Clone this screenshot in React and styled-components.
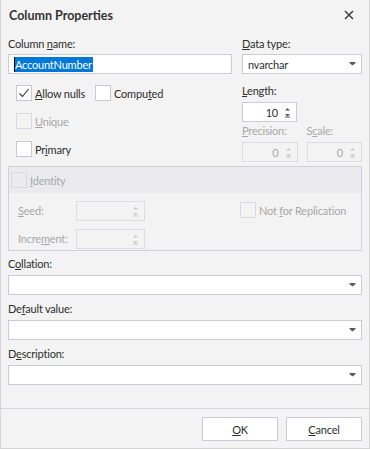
import React from "react";
import styled, { createGlobalStyle } from "styled-components";

const FONT = `Lato, "Open Sans", sans-serif`;

const Global = createGlobalStyle`
  html, body { margin: 0; padding: 0; background: #f3f3f3; }
  body { font-family: ${FONT}; font-size: 11px; letter-spacing: -0.2px; color: #2e2e2e; }
  * { box-sizing: border-box; }
`;

const Window = styled.div`
  width: 370px;
  height: 449px;
  background: #f3f3f3;
  border: 1px solid #d4d4d4;
  border-top: none;
  display: flex;
  flex-direction: column;
`;

const TitleBar = styled.div`
  height: 30px;
  flex: none;
  display: flex;
  align-items: center;
  justify-content: space-between;
  padding: 0 15px 0 8px;
  font-weight: 700;
  font-size: 12.5px;
  letter-spacing: 0;
  color: #333;
`;

const Body = styled.div`
  flex: 1;
  padding: 6px 7px 0 7px;
  display: flex;
  flex-direction: column;
`;

const TopGrid = styled.div`
  display: grid;
  grid-template-columns: 224px 1fr;
  column-gap: 10px;
`;

const Column = styled.div`
  display: flex;
  flex-direction: column;
`;

const Label = styled.div`
  height: 16px;
  line-height: 16px;
  margin-bottom: ${(p) => p.$gap ?? 2}px;
  margin-top: ${(p) => p.$top ?? 0}px;
  color: ${(p) => (p.$disabled ? "#a8a8a8" : "inherit")};
  white-space: nowrap;
`;

const Box = styled.div`
  height: 20px;
  width: ${(p) => p.$width || "100%"};
  border: 1px solid ${(p) => (p.$disabled ? "#dcdce4" : "#cbcbd8")};
  background: ${(p) => (p.$disabled ? "#f3f3f3" : "#fff")};
  color: ${(p) => (p.$disabled ? "#a8a8a8" : "inherit")};
  display: flex;
  align-items: center;
  padding: 0 5px;
  gap: 6px;
`;

const BoxText = styled.span`
  flex: 1;
  text-align: ${(p) => (p.$right ? "right" : "left")};
  white-space: nowrap;
`;

const Selected = styled.span`
  background: #0078d7;
  color: #fff;
  border-left: 1px solid #000;
  padding: 1px 1px 1px 0;
`;

const CheckList = styled.div`
  margin-top: 11px;
  padding-left: 8px;
  display: flex;
  flex-direction: column;
  gap: 12px;
`;

const CheckRow = styled.div`
  display: flex;
  gap: 10px;
`;

const CheckItem = styled.label`
  display: inline-flex;
  align-items: center;
  gap: 3px;
  height: 16px;
  color: ${(p) => (p.$disabled ? "#a8a8a8" : "inherit")};
  white-space: nowrap;
`;

const CheckBox = styled.span`
  width: 16px;
  height: 16px;
  flex: none;
  border: 1px solid ${(p) => (p.$disabled ? "#dadae2" : "#c9c9d6")};
  background: ${(p) => (p.$disabled ? "transparent" : "#fff")};
  display: flex;
  align-items: center;
  justify-content: center;
`;

const PairGrid = styled.div`
  display: grid;
  grid-template-columns: 1fr 1fr;
  column-gap: 9px;
`;

const Group = styled.div`
  margin-top: 4px;
  border: 1px solid #d0d0dc;
`;

const GroupHeader = styled.div`
  height: 26px;
  background: #ebebef;
  display: flex;
  align-items: center;
  padding-left: 2px;
`;

const GroupBody = styled.div`
  display: grid;
  grid-template-columns: 58px 69px 1fr;
  grid-template-rows: 20px 20px;
  row-gap: 8px;
  padding: 8px 0 1px 9px;
  align-items: center;
`;

const ReplicationCell = styled.div`
  grid-row: 1;
  grid-column: 3;
  padding-left: 95px;
`;

const Footer = styled.div`
  flex: none;
  border-top: 1px solid #d6d6de;
  padding: 8px 7px 7px 0;
  display: flex;
  justify-content: flex-end;
  gap: 8px;
`;

const Button = styled.button`
  width: 76px;
  height: 24px;
  background: #fff;
  border: 1px solid #cbcbd8;
  font-family: ${FONT};
  font-size: 11px;
  letter-spacing: -0.2px;
  color: #2e2e2e;
  padding: 0;
`;

const DropArrow = ({ disabled }) => (
  <svg width="7" height="4" viewBox="0 0 7 4">
    <path d="M0.5 0H6.5V1L3.5 3.5L0.5 1Z" fill={disabled ? "#c4c4c4" : "#5a5a5a"} />
  </svg>
);

const SpinArrows = ({ disabled }) => {
  const c = disabled ? "#cacaca" : "#555";
  return (
    <svg width="7" height="11" viewBox="0 0 7 11">
      <path d="M3.5 1L6 3.5H1Z" fill={c} />
      <path d="M1 7H6L3.5 9.5Z" fill={c} />
      <rect x="1" y="9.5" width="5" height="1" fill={c} />
    </svg>
  );
};

const Tick = () => (
  <svg width="12" height="12" viewBox="0 0 12 12">
    <path d="M1.5 6.5L4.5 9.5L10.5 2" fill="none" stroke="#333" strokeWidth="1.1" />
  </svg>
);

const Check = ({ checked, disabled, children }) => (
  <CheckItem $disabled={disabled}>
    <CheckBox $disabled={disabled}>{checked && <Tick />}</CheckBox>
    {children && <span>{children}</span>}
  </CheckItem>
);

const Spin = ({ value, disabled, width }) => (
  <Box $width={width} $disabled={disabled}>
    <BoxText $right>{value}</BoxText>
    <SpinArrows disabled={disabled} />
  </Box>
);

const Combo = ({ children }) => (
  <Box>
    <BoxText>{children}</BoxText>
    <DropArrow />
  </Box>
);

const Field = ({ label, children, top, gap }) => (
  <div>
    <Label $top={top} $gap={gap}>{label}</Label>
    {children}
  </div>
);

export default function App() {
  return (
    <>
      <Global />
      <Window>
        <TitleBar>
          <span>Column Properties</span>
          <svg width="10" height="10" viewBox="0 0 10 10">
            <path d="M1 1L9 9M9 1L1 9" stroke="#444" strokeWidth="1.6" />
          </svg>
        </TitleBar>
        <Body>
          <TopGrid>
            <Column>
              <Field label={<>Column <u>n</u>ame:</>}>
                <Box>
                  <BoxText><Selected>AccountNumber</Selected></BoxText>
                </Box>
              </Field>
              <CheckList>
                <CheckRow>
                  <Check checked><u>A</u>llow nulls</Check>
                  <Check>Compu<u>t</u>ed</Check>
                </CheckRow>
                <Check disabled><u>U</u>nique</Check>
                <Check>Pr<u>i</u>mary</Check>
              </CheckList>
            </Column>
            <Column>
              <Field label={<><u>D</u>ata type:</>}>
                <Combo>nvarchar</Combo>
              </Field>
              <Field top={9} gap={3} label={<><u>L</u>ength:</>}>
                <Spin value="10" width="55px" />
              </Field>
              <PairGrid>
                <div>
                  <Label $disabled $top={1} $gap={3}><u>P</u>recision:</Label>
                  <Spin value="0" disabled />
                </div>
                <div>
                  <Label $disabled $top={1} $gap={3}>S<u>c</u>ale:</Label>
                  <Spin value="0" disabled />
                </div>
              </PairGrid>
            </Column>
          </TopGrid>

          <Group>
            <GroupHeader>
              <Check disabled><u>I</u>dentity</Check>
            </GroupHeader>
            <GroupBody>
              <Label $disabled $gap={0}><u>S</u>eed:</Label>
              <Spin disabled width="69px" />
              <ReplicationCell>
                <Check disabled>Not <u>f</u>or Replication</Check>
              </ReplicationCell>
              <Label $disabled $gap={0}>Incre<u>m</u>ent:</Label>
              <Spin disabled width="69px" />
            </GroupBody>
          </Group>

          <Field top={5} gap={3} label={<>C<u>o</u>llation:</>}>
            <Combo />
          </Field>
          <Field top={6} gap={3} label={<>De<u>f</u>ault value:</>}>
            <Combo />
          </Field>
          <Field top={6} gap={3} label={<>D<u>e</u>scription:</>}>
            <Combo />
          </Field>
        </Body>
        <Footer>
          <Button><u>O</u>K</Button>
          <Button><u>C</u>ancel</Button>
        </Footer>
      </Window>
    </>
  );
}
